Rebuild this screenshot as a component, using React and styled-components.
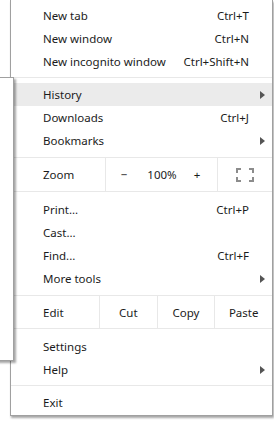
import React from 'react';
import styled, { createGlobalStyle } from 'styled-components';

const Global = createGlobalStyle`
  html, body {
    margin: 0;
    padding: 0;
    background: #ffffff;
  }
  body {
    font-family: "Noto Sans", "Segoe UI", sans-serif;
    font-size: 11.5px;
    color: #1b1b1b;
  }
`;

const Page = styled.div`
  position: relative;
  width: 274px;
  height: 421px;
  overflow: hidden;
  background: #ffffff;
`;

const Menu = styled.div`
  box-sizing: border-box;
  margin-left: 10px;
  width: 263px;
  padding-top: 4px;
  padding-bottom: 1px;
  background: #ffffff;
  border: 1px solid #a0a0a0;
  border-top: none;
  box-shadow: 1px 2px 2px rgba(0, 0, 0, 0.35);
`;

const SidePanel = styled.div`
  position: absolute;
  left: -10px;
  top: 77px;
  width: 24px;
  height: 284px;
  box-sizing: border-box;
  background: #ffffff;
  border: 1px solid #a0a0a0;
  box-shadow: 2px 2px 2px rgba(0, 0, 0, 0.35);
`;

const Item = styled.div`
  display: flex;
  align-items: center;
  height: 23px;
  padding-left: 32px;
  padding-right: 7px;
  background: ${p => (p.$active ? '#ebebeb' : 'transparent')};
`;

const Label = styled.span`
  flex: 1;
  white-space: nowrap;
`;

const Shortcut = styled.span`
  white-space: nowrap;
`;

const ArrowSlot = styled.span`
  width: 16px;
  display: flex;
  justify-content: flex-end;
  align-items: center;
`;

const Separator = styled.div`
  height: 1px;
  background: #e8e8e8;
  margin-top: ${p => p.$top}px;
  margin-bottom: ${p => p.$bottom}px;
`;

const SplitRow = styled.div`
  display: flex;
  align-items: stretch;
  height: ${p => p.$height}px;
`;

const RowLabel = styled.div`
  box-sizing: border-box;
  width: ${p => p.$width}px;
  padding-left: 32px;
  display: flex;
  align-items: center;
`;

const Cell = styled.div`
  flex: 1;
  border-left: 1px solid #e8e8e8;
  display: flex;
  align-items: center;
  justify-content: center;
`;

const ZoomControls = styled.div`
  border-left: 1px solid #e8e8e8;
  display: grid;
  grid-template-columns: 36px 40px 30px;
  width: 111px;
  align-items: center;
  justify-items: center;
`;

function Arrow() {
  return (
    <svg width="5" height="8" viewBox="0 0 5 8">
      <path d="M0 0 L5 4 L0 8 Z" fill="#555" />
    </svg>
  );
}

function FullscreenIcon() {
  return (
    <svg width="18" height="14" viewBox="0 0 18 14" fill="none" stroke="#8c8c8c" strokeWidth="2">
      <path d="M1 5 V1 H5" />
      <path d="M13 1 H17 V5" />
      <path d="M17 9 V13 H13" />
      <path d="M5 13 H1 V9" />
    </svg>
  );
}

function MenuItem({ label, shortcut, sub, active }) {
  return (
    <Item $active={active}>
      <Label>{label}</Label>
      {shortcut && <Shortcut>{shortcut}</Shortcut>}
      <ArrowSlot>{sub && <Arrow />}</ArrowSlot>
    </Item>
  );
}

export default function App() {
  return (
    <Page>
      <Global />
      <Menu>
        <MenuItem label="New tab" shortcut="Ctrl+T" />
        <MenuItem label="New window" shortcut="Ctrl+N" />
        <MenuItem label="New incognito window" shortcut="Ctrl+Shift+N" />
        <Separator $top={4} $bottom={5} />
        <MenuItem label="History" sub active />
        <MenuItem label="Downloads" shortcut="Ctrl+J" />
        <MenuItem label="Bookmarks" sub />
        <Separator $top={5} $bottom={0} />
        <SplitRow $height={33}>
          <RowLabel $width={94}>Zoom</RowLabel>
          <ZoomControls>
            <span>−</span>
            <span>100%</span>
            <span>+</span>
          </ZoomControls>
          <Cell>
            <FullscreenIcon />
          </Cell>
        </SplitRow>
        <Separator $top={0} $bottom={6} />
        <MenuItem label="Print..." shortcut="Ctrl+P" />
        <MenuItem label="Cast..." />
        <MenuItem label="Find..." shortcut="Ctrl+F" />
        <MenuItem label="More tools" sub />
        <Separator $top={5} $bottom={0} />
        <SplitRow $height={32}>
          <RowLabel $width={88}>Edit</RowLabel>
          <Cell>Cut</Cell>
          <Cell>Copy</Cell>
          <Cell>Paste</Cell>
        </SplitRow>
        <Separator $top={0} $bottom={6} />
        <MenuItem label="Settings" />
        <MenuItem label="Help" sub />
        <Separator $top={4} $bottom={5} />
        <MenuItem label="Exit" />
      </Menu>
      <SidePanel />
    </Page>
  );
}
